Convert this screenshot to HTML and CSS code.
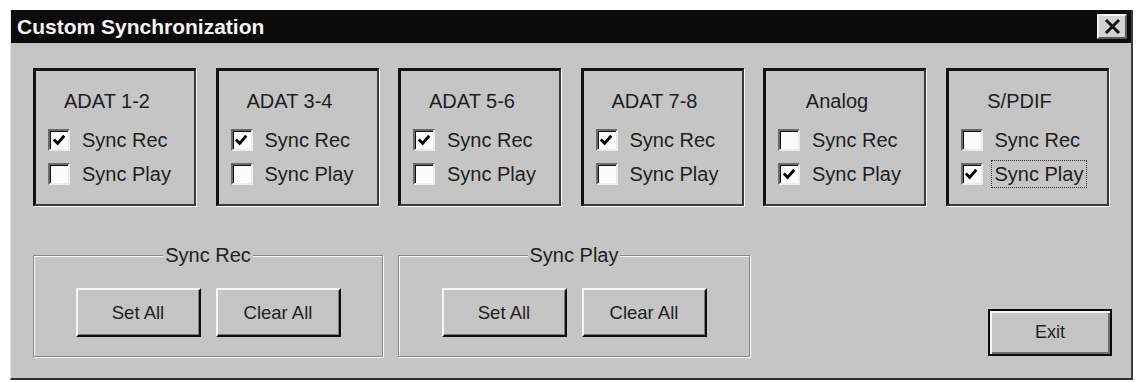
FILE: index.html
```html
<!DOCTYPE html>
<html lang="en">
<head>
    <meta charset="UTF-8">
    <title>Custom Synchronization</title>
    <link rel="stylesheet" href="styles.css">
</head>
<body>
    <div class="window">
        <div class="titlebar">
            <span class="title">Custom Synchronization</span>
            <button class="close-btn" aria-label="Close">
                <svg width="17" height="15" viewBox="0 0 17 15"><path d="M2 1 L15 14 M15 1 L2 14" stroke="#111" stroke-width="3"/></svg>
            </button>
        </div>
        <div class="content">
            <div class="channels">
                <div class="channel">
                    <div class="channel-name">ADAT 1-2</div>
                    <label class="check"><span class="box"><svg viewBox="0 0 18 18"><polyline points="3,8 7,12 14,4" fill="none" stroke="#000" stroke-width="3"/></svg></span><span class="text">Sync Rec</span></label>
                    <label class="check"><span class="box"></span><span class="text">Sync Play</span></label>
                </div>
                <div class="channel">
                    <div class="channel-name">ADAT 3-4</div>
                    <label class="check"><span class="box"><svg viewBox="0 0 18 18"><polyline points="3,8 7,12 14,4" fill="none" stroke="#000" stroke-width="3"/></svg></span><span class="text">Sync Rec</span></label>
                    <label class="check"><span class="box"></span><span class="text">Sync Play</span></label>
                </div>
                <div class="channel">
                    <div class="channel-name">ADAT 5-6</div>
                    <label class="check"><span class="box"><svg viewBox="0 0 18 18"><polyline points="3,8 7,12 14,4" fill="none" stroke="#000" stroke-width="3"/></svg></span><span class="text">Sync Rec</span></label>
                    <label class="check"><span class="box"></span><span class="text">Sync Play</span></label>
                </div>
                <div class="channel">
                    <div class="channel-name">ADAT 7-8</div>
                    <label class="check"><span class="box"><svg viewBox="0 0 18 18"><polyline points="3,8 7,12 14,4" fill="none" stroke="#000" stroke-width="3"/></svg></span><span class="text">Sync Rec</span></label>
                    <label class="check"><span class="box"></span><span class="text">Sync Play</span></label>
                </div>
                <div class="channel">
                    <div class="channel-name">Analog</div>
                    <label class="check"><span class="box"></span><span class="text">Sync Rec</span></label>
                    <label class="check"><span class="box"><svg viewBox="0 0 18 18"><polyline points="3,8 7,12 14,4" fill="none" stroke="#000" stroke-width="3"/></svg></span><span class="text">Sync Play</span></label>
                </div>
                <div class="channel">
                    <div class="channel-name">S/PDIF</div>
                    <label class="check"><span class="box"></span><span class="text">Sync Rec</span></label>
                    <label class="check"><span class="box"><svg viewBox="0 0 18 18"><polyline points="3,8 7,12 14,4" fill="none" stroke="#000" stroke-width="3"/></svg></span><span class="text focused">Sync Play</span></label>
                </div>
            </div>

            <div class="bottom">
                <fieldset class="group group-rec">
                    <legend>Sync Rec</legend>
                    <div class="btn-row">
                        <button class="btn">Set All</button>
                        <button class="btn">Clear All</button>
                    </div>
                </fieldset>
                <fieldset class="group group-play">
                    <legend>Sync Play</legend>
                    <div class="btn-row">
                        <button class="btn">Set All</button>
                        <button class="btn">Clear All</button>
                    </div>
                </fieldset>
                <button class="btn exit-btn">Exit</button>
            </div>
        </div>
    </div>
</body>
</html>
```

FILE: styles.css
```css
body {
    margin: 0;
    background: #fff;
    font-family: "Liberation Sans", Arial, sans-serif;
    color: #1e1e1e;
}
.window {
    margin: 10px 0 0 10px;
    width: 1123px;
    height: 370px;
    box-sizing: border-box;
    background: #c5c5c5;
    border-left: 1px solid #e6e6e6;
    border-right: 2px solid #3c3c3c;
    border-bottom: 2px solid #2e2e2e;
}
.titlebar {
    height: 33px;
    background: #0b0b0b;
    display: flex;
    align-items: center;
    justify-content: space-between;
    padding: 0 4px 0 6px;
}
.title {
    color: #f4f4f4;
    font-weight: bold;
    font-size: 21px;
}
.close-btn {
    width: 30px;
    height: 25px;
    padding: 0;
    background: #d2d2d2;
    border: 2px solid;
    border-color: #f4f4f4 #5a5a5a #5a5a5a #f4f4f4;
    display: flex;
    align-items: center;
    justify-content: center;
}
.content {
    padding: 25px 19px 0 22px;
}
.channels {
    display: grid;
    grid-template-columns: repeat(6, 163px);
    column-gap: 19.5px;
}
.channel {
    height: 138px;
    box-sizing: border-box;
    border-top: 3px solid #121212;
    border-left: 3px solid #121212;
    border-right: 2px solid #3a3a3a;
    border-bottom: 2px solid #3a3a3a;
    box-shadow: 1px 1px 0 #fafafa;
    padding: 18px 0 13px 12px;
}
.channel-name {
    font-size: 20px;
    line-height: 24px;
    text-align: center;
    padding-right: 28px;
    margin-bottom: 10px;
}
.check {
    display: flex;
    align-items: center;
    height: 34px;
    font-size: 20px;
}
.box {
    width: 22px;
    height: 22px;
    box-sizing: border-box;
    background: #fbfbfb;
    border: 2px solid;
    border-color: #6a6a6a #ececec #ececec #6a6a6a;
    box-shadow: inset 1px 1px 0 #111;
    display: flex;
    align-items: center;
    justify-content: center;
}
.box svg {
    width: 17px;
    height: 17px;
}
.check .text {
    margin-left: 8px;
    padding: 1px 3px;
    line-height: 24px;
    border: 1px dotted transparent;
}
.check .text.focused {
    border-color: #333;
}
.bottom {
    display: flex;
    align-items: flex-end;
    margin-top: 39px;
}
.group {
    margin: 0;
    box-sizing: border-box;
    height: 112px;
    padding: 23px 0 0;
    border: 1px solid #868686;
    box-shadow: inset 1px 1px 0 #fafafa, 1px 1px 0 #fafafa;
}
.group-rec {
    width: 350px;
}
.group-play {
    width: 352px;
    margin-left: 15px;
}
.group legend {
    margin: 0 auto;
    padding: 0 2px;
    font-size: 20px;
    line-height: 20px;
    background: #c5c5c5;
}
.btn-row {
    display: flex;
    justify-content: center;
    gap: 15px;
}
.btn {
    width: 125px;
    height: 49px;
    box-sizing: border-box;
    background: #c5c5c5;
    border: 2px solid;
    border-color: #f8f8f8 #0e0e0e #0e0e0e #f8f8f8;
    box-shadow: inset -1px -1px 0 #7c7c7c;
    font-family: "Liberation Sans", Arial, sans-serif;
    font-size: 18.5px;
    color: #1e1e1e;
    padding: 0;
}
.exit-btn {
    margin-left: auto;
    margin-bottom: 1px;
    width: 124px;
    height: 47px;
    border: 2px solid #0a0a0a;
    box-shadow: inset 2px 2px 0 #f6f6f6, inset -2px -2px 0 #6e6e6e;
    font-size: 18px;
}
```
